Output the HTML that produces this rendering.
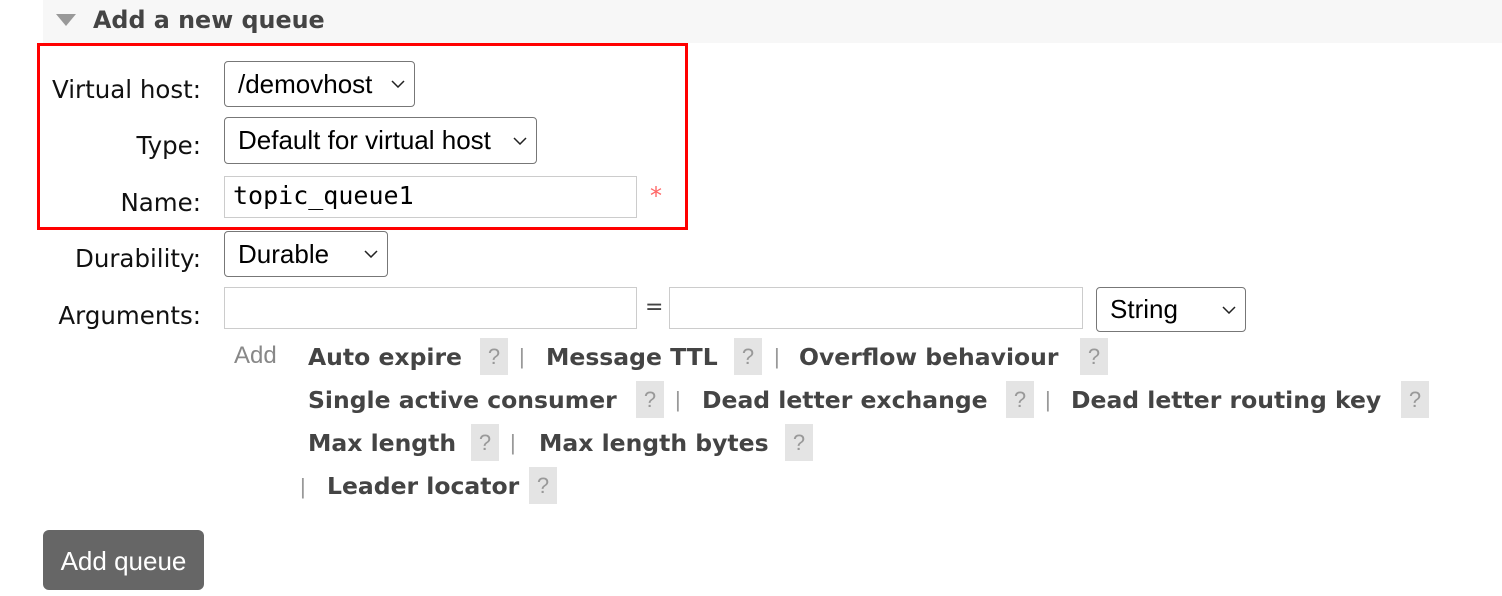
<!DOCTYPE html>
<html><head><meta charset="utf-8"><style>
*{margin:0;padding:0;box-sizing:border-box}
body{width:1502px;height:596px;background:#fff;position:relative;overflow:hidden;font-family:"DejaVu Sans",sans-serif}
.a{position:absolute;white-space:nowrap}
.hdr{left:43px;top:0;width:1459px;height:43px;background:#f7f7f7}
.lbl{right:1301px;font-size:24.5px;color:#111;text-align:right;font-family:"DejaVu Sans",sans-serif}
.sel{border:1.5px solid #777;border-radius:4px;background:#fff;font-family:"Liberation Sans",sans-serif;font-size:26px;color:#000;padding-left:13px;display:flex;align-items:center}
.sel svg{position:absolute;right:9px;top:50%;margin-top:-4px}
.inp{border:1.5px solid #ccc;background:#fff}
.b{font-weight:bold;font-size:23.5px;color:#444}
.q{width:28px;height:37px;background:#e4e4e4;color:#999;font-family:"Liberation Sans",sans-serif;font-size:22px;text-align:center;line-height:37px}
.p{color:#999;font-family:"Liberation Sans",sans-serif;font-size:22px}
</style></head><body>
<div class="a hdr"></div>
<svg class="a" style="left:56px;top:14px" width="20" height="14"><polygon points="0,0 20,0 10,12" fill="#999"/></svg>
<div class="a b" style="left:93px;top:6px;font-size:23.8px">Add a new queue</div>
<div class="a" style="left:37px;top:43px;width:651px;height:187px;border:3px solid #f00"></div>

<div class="a lbl" style="top:75px">Virtual host:</div>
<div class="a lbl" style="top:131px">Type:</div>
<div class="a lbl" style="top:188px">Name:</div>
<div class="a lbl" style="top:244px">Durability:</div>
<div class="a lbl" style="top:301px">Arguments:</div>

<div class="a sel" style="left:224px;top:61px;width:191px;height:46px">/demovhost<svg width="14" height="8"><path d="M1 1L7 7L13 1" fill="none" stroke="#222" stroke-width="1.5"/></svg></div>
<div class="a sel" style="left:224px;top:117px;width:313px;height:47px">Default for virtual host<svg width="14" height="8"><path d="M1 1L7 7L13 1" fill="none" stroke="#222" stroke-width="1.5"/></svg></div>
<div class="a inp" style="left:224px;top:176px;width:413px;height:42px;font-family:'DejaVu Sans Mono',monospace;font-size:25px;padding:4px 0 0 8px">topic_queue1</div>
<div class="a" style="left:650px;top:182px;color:#f66;font-size:24px">*</div>
<div class="a sel" style="left:224px;top:231px;width:164px;height:46px">Durable<svg width="14" height="8"><path d="M1 1L7 7L13 1" fill="none" stroke="#222" stroke-width="1.5"/></svg></div>
<div class="a inp" style="left:224px;top:287px;width:413px;height:42px"></div>
<div class="a" style="left:645px;top:295px;font-size:22px;color:#444">=</div>
<div class="a inp" style="left:669px;top:287px;width:414px;height:42px"></div>
<div class="a sel" style="left:1096px;top:287px;width:150px;height:45px">String<svg width="14" height="8"><path d="M1 1L7 7L13 1" fill="none" stroke="#222" stroke-width="1.5"/></svg></div>

<div class="a p" style="left:234px;top:342px;color:#888;font-size:24px">Add</div>

<div class="a b" style="left:308px;top:343px">Auto expire</div><div class="a q" style="left:480px;top:338px">?</div><div class="a p" style="left:519px;top:344px">|</div>
<div class="a b" style="left:546px;top:343px">Message TTL</div><div class="a q" style="left:734px;top:338px">?</div><div class="a p" style="left:774px;top:344px">|</div>
<div class="a b" style="left:799px;top:343px">Overflow behaviour</div><div class="a q" style="left:1080px;top:338px">?</div>

<div class="a b" style="left:308px;top:386px">Single active consumer</div><div class="a q" style="left:636px;top:381px">?</div><div class="a p" style="left:675px;top:387px">|</div>
<div class="a b" style="left:702px;top:386px">Dead letter exchange</div><div class="a q" style="left:1006px;top:381px">?</div><div class="a p" style="left:1045px;top:387px">|</div>
<div class="a b" style="left:1071px;top:386px">Dead letter routing key</div><div class="a q" style="left:1401px;top:381px">?</div>

<div class="a b" style="left:308px;top:429px">Max length</div><div class="a q" style="left:471px;top:424px">?</div><div class="a p" style="left:510px;top:430px">|</div>
<div class="a b" style="left:539px;top:429px">Max length bytes</div><div class="a q" style="left:785px;top:424px">?</div>

<div class="a p" style="left:300px;top:474px">|</div>
<div class="a b" style="left:327px;top:472px">Leader locator</div><div class="a q" style="left:529px;top:467px">?</div>

<div class="a" style="left:43px;top:530px;width:161px;height:60px;background:#666;border-radius:6px;color:#fff;font-family:'Liberation Sans',sans-serif;font-size:26px;line-height:62px;text-align:center">Add queue</div>
</body></html>
